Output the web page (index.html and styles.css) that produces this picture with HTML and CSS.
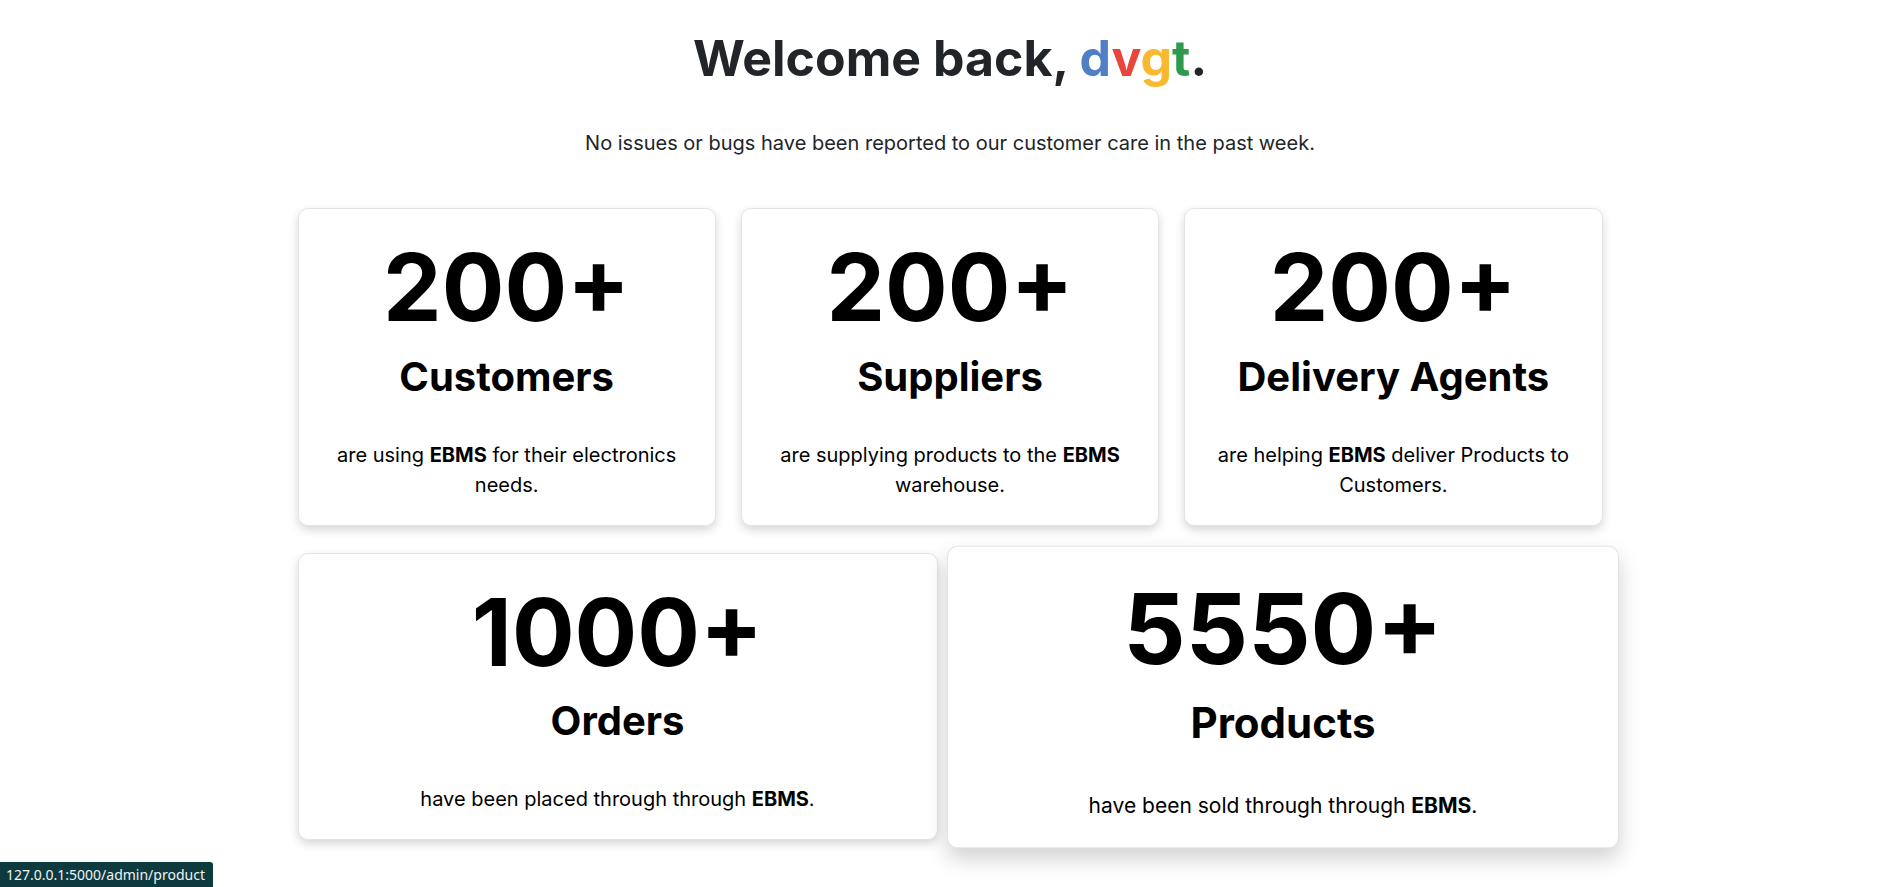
FILE: index.html
```html
<!DOCTYPE html>
<html lang="en">
<head>
<meta charset="utf-8">
<title>Admin Dashboard</title>
<link rel="stylesheet" href="styles.css">
</head>
<body>
<main class="page">
  <header class="intro">
    <h1 class="welcome">Welcome back, <span class="c-blue">d</span><span class="c-red">v</span><span class="c-yellow">g</span><span class="c-green">t</span>.</h1>
    <p class="lead">No issues or bugs have been reported to our customer care in the past week.</p>
  </header>

  <section class="stats">
    <div class="row row-3">
      <div class="card">
        <div class="num">200+</div>
        <h2 class="label">Customers</h2>
        <p class="desc">are using <b>EBMS</b> for their electronics needs.</p>
      </div>
      <div class="card">
        <div class="num">200+</div>
        <h2 class="label">Suppliers</h2>
        <p class="desc">are supplying products to the <b>EBMS</b> warehouse.</p>
      </div>
      <div class="card">
        <div class="num">200+</div>
        <h2 class="label">Delivery Agents</h2>
        <p class="desc">are helping <b>EBMS</b> deliver Products to Customers.</p>
      </div>
    </div>
    <div class="row row-2">
      <div class="card">
        <div class="num">1000+</div>
        <h2 class="label">Orders</h2>
        <p class="desc">have been placed through through <b>EBMS</b>.</p>
      </div>
      <div class="card card-hover">
        <div class="num">5550+</div>
        <h2 class="label">Products</h2>
        <p class="desc">have been sold through through <b>EBMS</b>.</p>
      </div>
    </div>
  </section>
</main>
<div class="statusbar">127.0.0.1:5000/admin/product</div>
</body>
</html>
```
FILE: styles.css
```css
* { box-sizing: border-box; }
html, body { margin: 0; padding: 0; background: #fff; }
body {
  font-family: "Inter", "Noto Sans", sans-serif;
  color: #212529;
}
.page {
  padding-top: 28px;
  padding-bottom: 40px;
}
.intro {
  text-align: center;
}
.welcome {
  margin: 0;
  font-size: 50px;
  line-height: 1.2;
  font-weight: 700;
  color: #212529;
}
.c-blue { color: #4f80c6; }
.c-red { color: #e8453c; }
.c-yellow { color: #f8b92f; }
.c-green { color: #2f9a4d; }
.lead {
  margin: 40px 0 0;
  font-size: 20px;
  line-height: 30px;
  font-weight: 400;
  color: #212529;
}
.stats {
  width: 1305px;
  margin: 50px auto 0;
  display: flex;
  flex-direction: column;
  gap: 27px;
}
.row {
  display: grid;
  gap: 25px;
}
.row-3 { grid-template-columns: repeat(3, 1fr); }
.row-2 { grid-template-columns: repeat(2, 1fr); }
.card {
  background: #fff;
  border: 1px solid #e4e4e4;
  border-radius: 10px;
  box-shadow: 0 4px 10px rgba(0, 0, 0, 0.16);
  text-align: center;
  padding: 23px 16px 25px;
  color: #000;
}
.card-hover {
  transform: scale(1.05);
  box-shadow: 0 10px 20px rgba(0, 0, 0, 0.18);
}
.num {
  font-size: 93px;
  line-height: 1.2;
  font-weight: 700;
}
.label {
  margin: 9px 0 0;
  font-size: 40px;
  line-height: 1.2;
  font-weight: 700;
}
.desc {
  margin: 39px 0 0;
  font-size: 20px;
  line-height: 30px;
  font-weight: 400;
}
.desc b { font-weight: 700; }
.statusbar {
  position: fixed;
  left: 0;
  bottom: 0;
  height: 25px;
  padding: 0 8px 0 6px;
  background: #0d3a3f;
  color: #f2f2f2;
  font-family: "Noto Sans", "Liberation Sans", sans-serif;
  font-size: 14px;
  line-height: 25px;
  border-top-right-radius: 3px;
}
```
